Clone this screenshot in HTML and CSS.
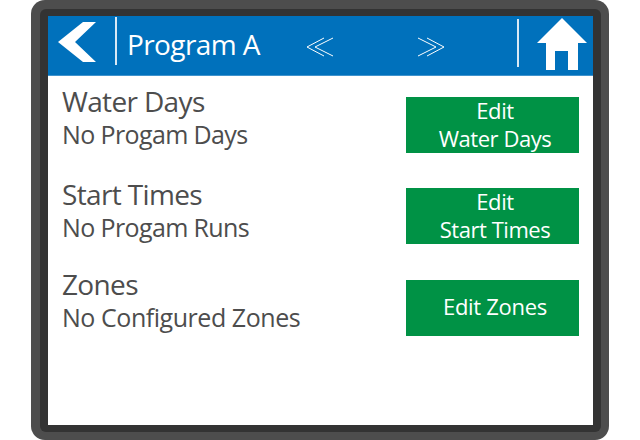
FILE: index.html
```html
<!DOCTYPE html>
<html lang="en">
<head>
<meta charset="utf-8">
<title>Program A</title>
<link rel="stylesheet" href="styles.css">
</head>
<body>
<div class="device">
  <div class="bezel">
    <div class="screen">
      <header class="topbar">
        <svg class="back" viewBox="0 0 38 40" width="38" height="40"><path d="M0 20 L25 0 L38 0 L17 20 L38 40 L25 40 Z" fill="#fff"/></svg>
        <span class="divider"></span>
        <span class="title">Program A</span>
        <svg class="chev prev" viewBox="0 0 28 20" width="28" height="20"><path d="M18 1 L1 10 L18 19 M27 1 L9 10 L27 19" fill="none" stroke="#fff" stroke-width="1"/></svg>
        <svg class="chev next" viewBox="0 0 28 20" width="28" height="20"><path d="M10 1 L27 10 L10 19 M1 1 L19 10 L1 19" fill="none" stroke="#fff" stroke-width="1"/></svg>
        <span class="divider right"></span>
        <svg class="home" viewBox="0 0 50 52" width="50" height="52"><path d="M25 0 L50 25 L41 25 L41 52 L31 52 L31 33 L18 33 L18 52 L9 52 L9 25 L0 25 Z" fill="#fff"/></svg>
      </header>
      <main class="rows">
        <section class="row first">
          <div class="info"><h2 class="name">Water Days</h2><p class="status">No Progam Days</p></div>
          <button class="edit"><span>Edit<br>Water Days</span></button>
        </section>
        <section class="row">
          <div class="info"><h2 class="name">Start Times</h2><p class="status">No Progam Runs</p></div>
          <button class="edit"><span>Edit<br>Start Times</span></button>
        </section>
        <section class="row last">
          <div class="info"><h2 class="name">Zones</h2><p class="status">No Configured Zones</p></div>
          <button class="edit"><span>Edit Zones</span></button>
        </section>
      </main>
    </div>
  </div>
</div>
</body>
</html>
```
FILE: styles.css
```css
* { box-sizing: border-box; }
html, body { margin: 0; padding: 0; background: #fff; }
body { width: 640px; height: 440px; overflow: hidden; font-family: "Open Sans", sans-serif; }
.device {
  width: 578px; height: 440px; margin-left: 31px;
  background: #4d4d4d; border-radius: 14px; padding: 9px 8px 8px 9px;
}
.bezel {
  width: 100%; height: 100%;
  background: #333; border-radius: 6px; padding: 7px 8px 7px 8px;
}
.screen { width: 100%; height: 100%; background: #fff; display: flex; flex-direction: column; }
.topbar {
  height: 60px; background: #0071bc; display: flex; align-items: center;
  color: #fff; flex: none; border-bottom: 1px solid #3f93cd;
}
.back { margin-left: 10px; margin-top: -8px; flex: none; }
.divider { width: 2px; height: 48px; background: #d9e9f5; margin-left: 19px; margin-top: -9px; flex: none; }
.title { font-size: 28px; margin-left: 10px; margin-top: -4px; width: 179px; letter-spacing: -0.6px; white-space: nowrap; }
.chev { flex: none; }
.prev { margin-top: 3px; }
.next { margin-left: 83px; margin-top: 3px; }
.divider.right { margin-left: 72px; margin-top: -5px; }
.home { margin-left: 18px; margin-top: -3px; flex: none; }
.rows { display: flex; flex-direction: column; padding: 21px 14px 0 14px; gap: 35px; }
.row { display: flex; justify-content: space-between; align-items: flex-start; height: 56px; }
.row.last { margin-top: 1px; }
.info { color: #4d4d4d; margin-top: -11px; }
.first .info { margin-top: -13px; }
.last .info { margin-top: -13px; }
.name { margin: 0; font-size: 28px; line-height: 34px; font-weight: 400; letter-spacing: -0.65px; white-space: nowrap; }
.status { margin: 0; font-size: 25px; line-height: 32px; letter-spacing: -0.62px; white-space: nowrap; }
.last .status { letter-spacing: -0.45px; }
.edit {
  width: 173px; height: 56px; flex: none; border: 0; padding: 0 0 2px 5px;
  display: flex; align-items: center; justify-content: center; text-align: center;
  background: #009245; color: #fff; font-family: inherit; font-size: 22px; line-height: 28px; letter-spacing: -0.45px;
}
.last .edit { padding-bottom: 5px; letter-spacing: -0.3px; }
```
